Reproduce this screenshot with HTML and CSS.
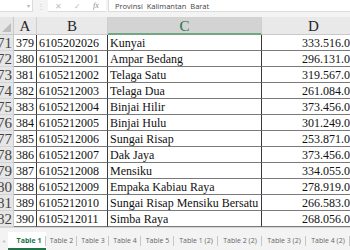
FILE: index.html
```html
<!DOCTYPE html>
<html lang="id">
<head>
    <meta charset="UTF-8">
    <title>Sheet</title>
    <link rel="stylesheet" href="styles.css">
</head>
<body>
<div class="app">
    <div class="formulaBar">
        <div class="nameBox"><span class="caret">&#9662;</span></div>
        <div class="grip">&#8942;</div>
        <div class="fxButtons">
            <span>&#10005;</span>
            <span>&#10003;</span>
            <span class="fx">fx</span>
        </div>
        <div class="formula">Provinsi&nbsp; Kalimantan&nbsp; Barat</div>
    </div>

    <div class="sheet">
        <div class="corner"></div>
        <div class="colHead">A</div>
        <div class="colHead">B</div>
        <div class="colHead active">C</div>
        <div class="colHead">D</div>

        <div class="rowHead">371</div><div class="cell">379</div><div class="cell">6105202026</div><div class="cell">Kunyai</div><div class="cell num">333.516.000</div>
        <div class="rowHead">372</div><div class="cell">380</div><div class="cell">6105212001</div><div class="cell">Ampar Bedang</div><div class="cell num">296.131.000</div>
        <div class="rowHead">373</div><div class="cell">381</div><div class="cell">6105212002</div><div class="cell">Telaga Satu</div><div class="cell num">319.567.000</div>
        <div class="rowHead">374</div><div class="cell">382</div><div class="cell">6105212003</div><div class="cell">Telaga Dua</div><div class="cell num">261.084.000</div>
        <div class="rowHead">375</div><div class="cell">383</div><div class="cell">6105212004</div><div class="cell">Binjai Hilir</div><div class="cell num">373.456.000</div>
        <div class="rowHead">376</div><div class="cell">384</div><div class="cell">6105212005</div><div class="cell">Binjai Hulu</div><div class="cell num">301.249.000</div>
        <div class="rowHead">377</div><div class="cell">385</div><div class="cell">6105212006</div><div class="cell">Sungai Risap</div><div class="cell num">253.871.000</div>
        <div class="rowHead">378</div><div class="cell">386</div><div class="cell">6105212007</div><div class="cell">Dak Jaya</div><div class="cell num">373.456.000</div>
        <div class="rowHead">379</div><div class="cell">387</div><div class="cell">6105212008</div><div class="cell">Mensiku</div><div class="cell num">334.055.000</div>
        <div class="rowHead">380</div><div class="cell">388</div><div class="cell">6105212009</div><div class="cell">Empaka Kabiau Raya</div><div class="cell num">278.919.000</div>
        <div class="rowHead">381</div><div class="cell">389</div><div class="cell">6105212010</div><div class="cell">Sungai Risap Mensiku Bersatu</div><div class="cell num">266.583.000</div>
        <div class="rowHead">382</div><div class="cell">390</div><div class="cell">6105212011</div><div class="cell">Simba Raya</div><div class="cell num">268.056.000</div>
    </div>

    <div class="tabBar">
        <span class="arrow">&#9666;</span>
        <div class="tab first active">Table 1</div>
        <div class="tab w31">Table 2</div>
        <div class="tab">Table 3</div>
        <div class="tab">Table 4</div>
        <div class="tab w33">Table 5</div>
        <div class="tab wide">Table 1 (2)</div>
        <div class="tab wide">Table 2 (2)</div>
        <div class="tab wide">Table 3 (2)</div>
        <div class="tab wide">Table 4 (2)</div>
    </div>
</div>
</body>
</html>
```

FILE: styles.css
```css
* {
    margin: 0;
    padding: 0;
    box-sizing: border-box;
}

body {
    width: 350px;
    height: 250px;
    overflow: hidden;
    background: #fff;
}

.app {
    width: 350px;
    height: 250px;
    display: flex;
    flex-direction: column;
    overflow: hidden;
    background: #f3f3f3;
}

/* formula bar */
.formulaBar {
    height: 17px;
    display: flex;
    align-items: flex-start;
    background: #f3f3f3;
    font-family: "Open Sans", sans-serif;
    color: #b5b5b5;
}

.nameBox {
    width: 33px;
    height: 12px;
    background: #fff;
    border-right: 1px solid #dcdcdc;
    border-bottom: 1px solid #dcdcdc;
    display: flex;
    justify-content: flex-end;
    align-items: center;
    padding-right: 2px;
    font-size: 6px;
}

.grip {
    width: 15px;
    height: 12px;
    text-align: center;
    font-size: 8px;
    line-height: 12px;
    color: #c8c8c8;
}

.fxButtons {
    width: 58px;
    height: 12px;
    background: #fff;
    border-bottom: 1px solid #dcdcdc;
    display: flex;
    align-items: center;
    gap: 12px;
    padding-left: 7px;
    font-size: 8px;
    color: #bdbdbd;
}

.fxButtons .fx {
    font-family: "Liberation Serif", serif;
    font-style: italic;
    color: #8a8a8a;
}

.formula {
    flex: 1;
    height: 12px;
    margin-left: 2px;
    background: #fff;
    border-left: 1px solid #dcdcdc;
    border-bottom: 1px solid #dcdcdc;
    padding-left: 6px;
    font-size: 7.5px;
    line-height: 12px;
    color: #444;
    white-space: nowrap;
}

/* grid */
.sheet {
    display: grid;
    grid-template-columns: 14px 23px 71px 154px 104px;
    grid-template-rows: 18px repeat(12, 16px);
    width: 366px;
    background: #fff;
}

.corner {
    background: #e6e6e6;
    border-right: 1px solid #c9c9c9;
    border-bottom: 1px solid #c9c9c9;
    position: relative;
}

.corner::after {
    content: "";
    position: absolute;
    right: 2px;
    bottom: 2px;
    border-left: 9px solid transparent;
    border-bottom: 9px solid #bdbdbd;
}

.colHead {
    background: #e9e9e9;
    border-right: 1px solid #cfcfcf;
    border-bottom: 1px solid #c9c9c9;
    text-align: center;
    font-family: "Liberation Serif", serif;
    font-size: 15px;
    line-height: 18px;
    color: #262626;
}

.colHead:last-child {
    padding-right: 4px;
}

.colHead.active {
    background: #d3d3d3;
    border-bottom: 2px solid #6fa882;
    color: #217346;
}

.rowHead {
    background: #e6e6e6;
    border-right: 1px solid #c9c9c9;
    border-bottom: 1px solid #d4d4d4;
    overflow: hidden;
    display: flex;
    justify-content: flex-end;
    padding-right: 1px;
    font-family: "Liberation Serif", serif;
    font-size: 15px;
    line-height: 16px;
    color: #444;
}

.cell {
    border-right: 1px solid #3a3a3a;
    border-bottom: 1px solid #7a7a7a;
    padding: 0 2px;
    white-space: nowrap;
    overflow: hidden;
    font-family: "Liberation Serif", serif;
    font-size: 12px;
    line-height: 16px;
    color: #111;
}

.cell.num {
    text-align: right;
    padding-right: 3px;
}

/* sheet tabs */
.tabBar {
    flex: 1;
    display: flex;
    align-items: flex-end;
    border-top: 1px solid #d6d6d6;
    background: #f3f3f3;
    font-family: "Open Sans", sans-serif;
    font-size: 7px;
    color: #666;
    white-space: nowrap;
}

.arrow {
    width: 16px;
    height: 18px;
    line-height: 18px;
    padding-left: 2px;
    font-size: 6px;
    color: #c4c4c4;
}

.tab {
    flex: none;
    width: 32px;
    height: 18px;
    line-height: 18px;
    text-align: center;
    position: relative;
}

.tab::after {
    content: "";
    position: absolute;
    right: 0;
    top: 4px;
    height: 10px;
    border-right: 1px solid #c6c6c6;
}

.tab.first {
    width: 38px;
    padding-left: 4px;
}

.tab.w31 {
    width: 31px;
}

.tab.w33 {
    width: 33px;
}

.tab.wide {
    width: 44px;
}

.tab.active {
    background: #fff;
    color: #217346;
    font-weight: bold;
    border-bottom: 2px solid #217346;
}
```
